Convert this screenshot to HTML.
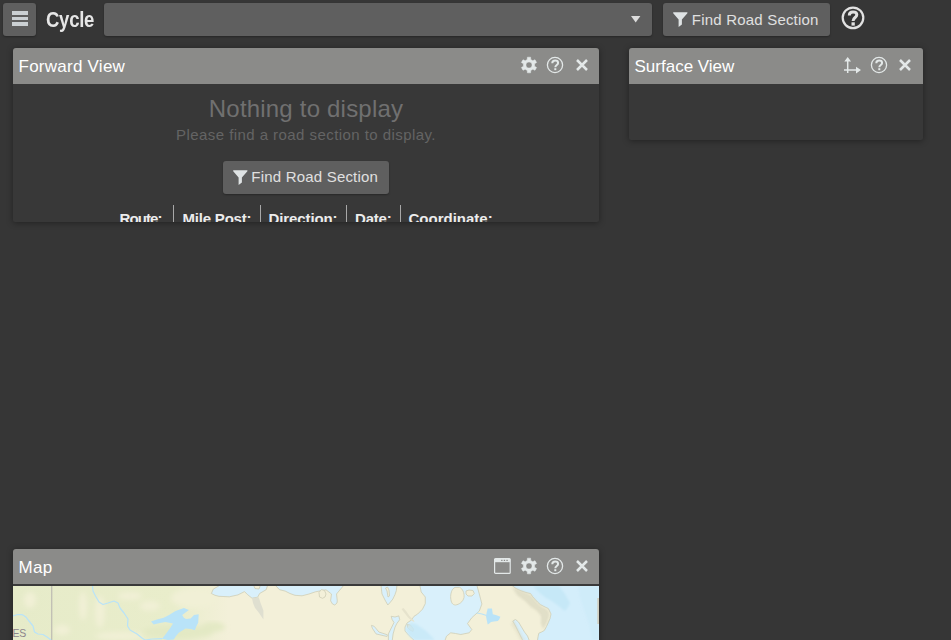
<!DOCTYPE html>
<html><head><meta charset="utf-8">
<style>
html,body{margin:0;padding:0;}
body{width:951px;height:640px;overflow:hidden;background:#363636;font-family:"Liberation Sans",sans-serif;position:relative;color:#e6e6e6;}
.abs{position:absolute;}
.btn{position:absolute;background:#5f5f5f;border-radius:3px;box-shadow:0 1px 2px rgba(0,0,0,.3);}
.panel{position:absolute;background:#383838;box-shadow:0 1px 6px rgba(0,0,0,.38);border-radius:3px 3px 2px 2px;overflow:hidden;}
.hdr{position:absolute;left:0;top:0;right:0;height:36px;background:#8b8b89;}
.ttl{position:absolute;left:5.5px;top:9px;font-size:17px;line-height:20px;color:#fff;white-space:nowrap;}
.t{position:absolute;white-space:nowrap;}
.lb{position:absolute;white-space:nowrap;top:161.5px;font-size:15px;line-height:17px;font-weight:bold;color:#ececec;}
.sep{position:absolute;top:157px;width:1px;height:20px;background:#a8a8a8;}
svg{position:absolute;overflow:visible;}
.ic{fill:#e3e8e8;}
</style></head><body>

<!-- top bar -->
<div class="btn" style="left:3px;top:3px;width:33px;height:33px;">
  <div class="abs" style="left:9px;top:8px;width:16px;height:3.6px;background:#cbd0d3;"></div>
  <div class="abs" style="left:9px;top:13.5px;width:16px;height:3.6px;background:#cbd0d3;"></div>
  <div class="abs" style="left:9px;top:19px;width:16px;height:3.6px;background:#cbd0d3;"></div>
</div>
<div class="t" id="cycle" style="left:45.5px;top:8.1px;font-size:21.3px;line-height:24px;font-weight:bold;color:#e6e6e6;letter-spacing:-.3px;transform:scaleX(.87);transform-origin:0 0;">Cycle</div>
<div class="btn" style="left:104px;top:3px;width:548px;height:33px;">
  <svg style="left:527px;top:13px;" width="10" height="7"><path d="M0 0H9.4L4.7 6.6Z" fill="#dcdcdc"/></svg>
</div>
<div class="btn" style="left:663px;top:3px;width:167px;height:33px;">
  <svg style="left:9.5px;top:9px;" width="15" height="15"><path d="M0.2 0.2H14.4V1.2L8.9 7.6V12.6L5.6 15V7.6L0.2 1.2Z" fill="#dfe3e4"/></svg>
  <div class="t" id="frs1" style="left:28.8px;top:7.8px;font-size:15px;line-height:17px;color:#e0e0e0;letter-spacing:.2px;">Find Road Section</div>
</div>
<svg style="left:841px;top:6px;" width="24" height="24" viewBox="0 0 24 24">
  <circle cx="12" cy="11.85" r="10.3" fill="none" stroke="#e2e2e2" stroke-width="2.2"/>
  <path d="M8.3 9.4C8.3 7 9.8 5.9 12 5.9C14.3 5.9 15.8 7 15.8 8.8C15.8 11.5 12.1 11.6 12.1 14.9" fill="none" stroke="#e2e2e2" stroke-width="3"/>
  <rect x="10.5" y="16.3" width="3.3" height="3.3" fill="#e2e2e2"/>
</svg>

<!-- Forward View -->
<div class="panel" style="left:13px;top:48px;width:586px;height:174px;">
  <div class="hdr"></div>
  <div class="ttl" id="fv" style="letter-spacing:.25px">Forward View</div>
  <svg style="left:508px;top:9px" width="16" height="16"><path class="ic" fill-rule="evenodd" stroke="#e3e8e8" stroke-width=".5" stroke-linejoin="round" d="M6.26 2.57L6.41 0.16L9.59 0.16L9.74 2.57L11.83 3.78L14.00 2.70L15.58 5.46L13.57 6.79L13.57 9.21L15.58 10.54L14.00 13.30L11.83 12.22L9.74 13.43L9.59 15.84L6.41 15.84L6.26 13.43L4.17 12.22L2.00 13.30L0.42 10.54L2.43 9.21L2.43 6.79L0.42 5.46L2.00 2.70L4.17 3.78ZM8 4.9A3.1 3.1 0 1 0 8 11.1A3.1 3.1 0 1 0 8 4.9Z"/></svg><svg style="left:533.4px;top:7.799999999999997px" width="18" height="18"><circle cx="9" cy="9" r="7.6" fill="none" stroke="#e3e8e8" stroke-width="1.3"/><path d="M6.3 7.3C6.3 5.5 7.5 4.6 9.2 4.6C10.9 4.6 12.1 5.5 12.1 7C12.1 8.9 9.3 9 9.3 11.2" fill="none" stroke="#e3e8e8" stroke-width="2"/><rect x="8.3" y="12.2" width="2" height="2" class="ic"/></svg><svg style="left:562.5px;top:11px" width="12" height="12"><path d="M1 1L11 11M11 1L1 11" stroke="#e3e8e8" stroke-width="2.5" fill="none"/></svg>
  <div class="t" id="ntd" style="left:0;width:586px;text-align:center;top:47px;font-size:24px;line-height:28px;color:#707070;letter-spacing:.2px;">Nothing to display</div>
  <div class="t" id="pls" style="left:0;width:586px;text-align:center;top:78px;font-size:15px;line-height:17px;color:#646464;letter-spacing:.44px;">Please find a road section to display.</div>
  <div class="btn" style="left:210px;top:113px;width:166px;height:33px;">
    <svg style="left:9.5px;top:9px;" width="15" height="15"><path d="M0.2 0.2H14.4V1.2L8.9 7.6V12.6L5.6 15V7.6L0.2 1.2Z" fill="#dfe3e4"/></svg>
    <div class="t" id="frs2" style="left:28.3px;top:6.8px;font-size:15px;line-height:17px;color:#e0e0e0;letter-spacing:.2px;">Find Road Section</div>
  </div>
  <div class="lb" style="left:106.5px;letter-spacing:-.9px;">Route:</div>
  <div class="lb" style="left:169.5px;letter-spacing:-.2px;">Mile Post:</div>
  <div class="lb" style="left:255.5px;letter-spacing:-.1px;">Direction:</div>
  <div class="lb" style="left:342px;letter-spacing:-.2px;">Date:</div>
  <div class="lb" style="left:395.5px;letter-spacing:0px;">Coordinate:</div>
  <div class="sep" style="left:160px;"></div>
  <div class="sep" style="left:247px;"></div>
  <div class="sep" style="left:333px;"></div>
  <div class="sep" style="left:387px;"></div>
</div>

<!-- Surface View -->
<div class="panel" style="left:629px;top:48px;width:294px;height:92px;">
  <div class="hdr"></div>
  <div class="ttl" id="sv">Surface View</div>
  <svg style="left:214.60000000000002px;top:9.099999999999994px" width="17" height="16"><path d="M3.7 2.5V16M0 13.1H13" stroke="#e3e8e8" stroke-width="1.5" fill="none"/><path class="ic" d="M3.7 0L7.1 4.6H0.3Z M17 13.1L12 9.8V16.4Z"/></svg><svg style="left:240.79999999999995px;top:7.799999999999997px" width="18" height="18"><circle cx="9" cy="9" r="7.6" fill="none" stroke="#e3e8e8" stroke-width="1.3"/><path d="M6.3 7.3C6.3 5.5 7.5 4.6 9.2 4.6C10.9 4.6 12.1 5.5 12.1 7C12.1 8.9 9.3 9 9.3 11.2" fill="none" stroke="#e3e8e8" stroke-width="2"/><rect x="8.3" y="12.2" width="2" height="2" class="ic"/></svg><svg style="left:270px;top:11px" width="12" height="12"><path d="M1 1L11 11M11 1L1 11" stroke="#e3e8e8" stroke-width="2.5" fill="none"/></svg>
</div>

<!-- Map -->
<div class="panel" style="left:13px;top:549px;width:586px;height:100px;">
  <div class="abs" id="map" style="left:0;top:37px;width:586px;height:64px;background:#f3f0d9;overflow:hidden;"><svg style="left:0;top:0" width="586" height="54" viewBox="13 586 586 54">
<defs>
<linearGradient id="gr" x1="0" x2="1" y1="0" y2="0"><stop offset="0" stop-color="#e6ebc9"/><stop offset=".75" stop-color="#e9edcb"/><stop offset="1" stop-color="#f3f0d9"/></linearGradient>
<filter id="bl"><feGaussianBlur stdDeviation="2.5"/></filter>
<filter id="bl1"><feGaussianBlur stdDeviation="1"/></filter>
</defs>
<rect x="13" y="586" width="586" height="54" fill="#f3f0d9"/>
<rect x="13" y="586" width="215" height="54" fill="url(#gr)"/>
<g filter="url(#bl)" fill="#f1f0d6">
<ellipse cx="83" cy="606" rx="4" ry="14"/><ellipse cx="100" cy="612" rx="5" ry="16"/><ellipse cx="62" cy="630" rx="8" ry="5"/><ellipse cx="130" cy="596" rx="12" ry="4"/><ellipse cx="30" cy="600" rx="6" ry="8"/>
<ellipse cx="150" cy="606" rx="10" ry="5"/><ellipse cx="195" cy="598" rx="24" ry="10"/><ellipse cx="120" cy="636" rx="25" ry="4"/>
</g>
<g filter="url(#bl)" fill="#e3e9c4"><ellipse cx="178" cy="632" rx="36" ry="7"/><ellipse cx="213" cy="627" rx="12" ry="5"/></g>
<rect x="51.2" y="586" width="1.1" height="54" fill="#b9b6b0"/>
<g fill="none" stroke="#b9e3f8" stroke-width="1.25" stroke-linejoin="round">
<path d="M92.5 586L93 591L95.5 596L99 602L103 604.5L108 603L114 601L118 603L120 608L124 613L128 619L127.5 626L130 630L137 634L142 638L145 640"/>
<path d="M13 616L18 614.5L22 614.5L26 617L29 621L33 626L34.5 632L38 634L43 634.5L47 637L51 640"/>
<path d="M145 640L152 639L162 638.7"/>
</g>
<path fill="#b9e3f8" d="M151 621.4L153.6 624.4L160 623L165.4 621.9L173 623.6L170.4 627.8L165.4 634.5L162 638.7L168 640L173.8 639.6L176 636L178.8 632.8L185.6 628.6L191 629L194.8 630.3L196.5 626L198.2 622.7L198.7 614.3L194 615.1L190.6 618.5L186 619L183.9 617.7L182.2 615.1L188.9 610.1L183.9 608.1L175.5 610.9L169 615L163.7 617.7L157 619.5Z"/>
<g fill="#d9f0fb" stroke="#cfceb6" stroke-width=".8" stroke-linejoin="round">
<!-- bay 1 -->
<path d="M220.3 585L213.2 589.2L211.4 593.5L215 595.3L218.9 596.3L229.3 596.8L237.9 594.9L244.5 591.6L247.3 594.4L252 598.2L257.7 597.2L259.6 593.5L266.2 589.7L267.7 585Z"/>
<!-- bay 2 -->
<path d="M275 585L279.5 589.7L285.2 591.1L290 593.5L295 595.3L302 595.8L308.7 594.1L315.5 591.8L326 589.8L331.5 594L330.6 600.8L332.5 604L334.8 605L337 603L337.3 600.8L336.5 594L340.7 589L344 585Z"/>
<!-- inlet 3 -->
<path d="M381 585L381.5 590L382 594L385 600L387.8 605L390.5 602L392.9 599L395 594.5L396.3 590.7L397 585Z"/>
<!-- main bay -->
<path d="M419.8 585L421.2 592L425.3 597L425.3 603.6L422.5 609.2L417.7 614L414 616.3L411.5 620L407 623L405 627L405 631L409.2 635.7L414.9 641L444.8 641L446.5 636.2L450.7 632.8L455.5 633.5L460.8 634.5L469.2 632.8L471.8 629.5L467.5 623.6L471.8 617.7L479.3 611L481.9 604L479.3 594L476.8 585Z"/>
<!-- inlet channel -->
<path d="M391.2 616.3L395 617L398.8 615.9L399.7 619.7L396.9 623.4L395 627.2L393.1 633.9L392.2 641L388.4 641L388.4 633.9L391.2 628.2L394 622.5L392.2 619.7Z"/>
<path d="M371.4 625.3L374.2 626.3L378.9 632L387.4 634.8L387 636.5L376 633.9L372.3 628.2Z"/>
<!-- east sea -->
<path fill="#d4eefb" d="M511.4 585L516 588.5L521 590.8L526 592.5L530.6 593.6L532.5 596.5L534.7 599L537.5 602L540.2 604.5L544 606.5L548.4 608.6L551 614L550 618.5L548.4 622.3L546.5 626.5L544.3 630.5L541.5 632L538.8 633.2L538 637L537.4 641L600 641L600 585Z"/>
<!-- fjord -->
<path d="M512.8 621L515.5 619.5L518.5 622L521.5 627L524.5 632L527.5 636L529.5 641L523 641L520.5 636L518 631L515.5 626Z"/>
</g>
<g fill="#f3f0d9" stroke="#cfceb6" stroke-width=".8" stroke-linejoin="round">
<path d="M455 587.4C451.5 589 450.5 594 450.7 598C451 602.5 452.5 605 455.5 605C459 604.5 463 602 464 597.5C464.6 593 462.5 588.5 459.5 587.3Z"/>
<path d="M466 591L469 590L473 590.5L474.3 593.5L472 596L468 596L466 594Z"/>
<path d="M385.5 588L387 591L388 597L389.5 596L389 590L387.5 587Z"/>
<path d="M319 592.4L321.5 589.5L324.5 590.5L326 594L325 597L322.5 598.3L319.5 597Z"/>
<path d="M253.5 585L255 588.5L259 589L260.5 585Z"/>
<path d="M407.3 624.5L410.5 625L413.5 629L413 631.5L410 630L407.5 627.5Z" fill="#e6e4d0"/>
</g>
<path d="M401.5 609L403.5 608L406.5 611.5L409.5 616L413.5 620L414.5 622L412 621L408 617.5L404.5 613Z" fill="#e6e3cd"/>
<g fill="#c6e8f7" filter="url(#bl1)">
<path d="M533 586L559 586L565 594L570 603L567.5 608L564.8 611L560.5 607.5L556.6 604.5L551 600.5L545.6 597.7L541 594L537.4 590.8Z"/>
<path d="M411 622.5L416.8 624.4L426.2 631L431.9 636.7L434.8 640L414.9 640L409.2 635.7L405.4 629.1Z" opacity=".8"/>
<path d="M578 586L599 586L599 640L592 640L589 625L584 610L580 598Z" opacity=".35"/>
</g>
<path d="M476.8 613L482 614L486.5 615.5" stroke="#b9e3f8" stroke-width="1.2" fill="none"/>
<path fill="#b9e3f8" d="M487.7 608.4L492 608.4L492.4 611.5L492.8 614.3L496.5 615.3L500.4 616.8L499.2 619.5L497.8 621L494 621.4L491 621.9L489.3 623.5L487.7 624.4L486.7 620L486 616L486.8 612Z"/>
<g filter="url(#bl1)" fill="#d9d7c0" opacity=".7">
<path d="M512 587L522 591L531 595L536 601L541 606L548 610L549.5 615L547 623L543.5 629L541 624L541 616L537 611L531 607L525 601L517 595Z"/>
<path d="M514 620L518 628L523 637L526 640L520 640L516 632L511 624Z" opacity=".6"/>
</g>
<path d="M252 598.2L253 603L254.9 607.7L258.7 612.4L263.4 619.5L263.4 610.5L260.6 603L258.7 597.2Z" fill="#dfdfd0"/>
<rect x="597.3" y="598" width="1.7" height="26" fill="#d0cfc0"/>
<text x="12.4" y="637.3" font-family="Liberation Sans" font-size="10.5" fill="#8d858c" letter-spacing="-.2">ES</text>
</svg></div>
  <div class="abs" style="left:0;top:35px;width:586px;height:2px;background:#3a3a3a;"></div>
  <div class="hdr" style="height:35px"></div>
  <div class="ttl" id="mp" style="letter-spacing:.3px">Map</div>
  <svg style="left:481.0px;top:9px" width="17" height="16"><rect x="0.6" y="0.6" width="15.6" height="14.8" rx="1" fill="none" stroke="#e3e8e8" stroke-width="1.2"/><rect x="0.6" y="0.6" width="15.6" height="3.6" class="ic"/><rect x="7.2" y="1.8" width="1.3" height="1.2" fill="#8b8b89"/><rect x="9.8" y="1.8" width="1.3" height="1.2" fill="#8b8b89"/><rect x="12.4" y="1.8" width="1.3" height="1.2" fill="#8b8b89"/></svg><svg style="left:508px;top:9px" width="16" height="16"><path class="ic" fill-rule="evenodd" stroke="#e3e8e8" stroke-width=".5" stroke-linejoin="round" d="M6.26 2.57L6.41 0.16L9.59 0.16L9.74 2.57L11.83 3.78L14.00 2.70L15.58 5.46L13.57 6.79L13.57 9.21L15.58 10.54L14.00 13.30L11.83 12.22L9.74 13.43L9.59 15.84L6.41 15.84L6.26 13.43L4.17 12.22L2.00 13.30L0.42 10.54L2.43 9.21L2.43 6.79L0.42 5.46L2.00 2.70L4.17 3.78ZM8 4.9A3.1 3.1 0 1 0 8 11.1A3.1 3.1 0 1 0 8 4.9Z"/></svg><svg style="left:533.3px;top:7.7999999999999545px" width="18" height="18"><circle cx="9" cy="9" r="7.6" fill="none" stroke="#e3e8e8" stroke-width="1.3"/><path d="M6.3 7.3C6.3 5.5 7.5 4.6 9.2 4.6C10.9 4.6 12.1 5.5 12.1 7C12.1 8.9 9.3 9 9.3 11.2" fill="none" stroke="#e3e8e8" stroke-width="2"/><rect x="8.3" y="12.2" width="2" height="2" class="ic"/></svg><svg style="left:562.5px;top:11px" width="12" height="12"><path d="M1 1L11 11M11 1L1 11" stroke="#e3e8e8" stroke-width="2.5" fill="none"/></svg>
</div>

</body></html>
